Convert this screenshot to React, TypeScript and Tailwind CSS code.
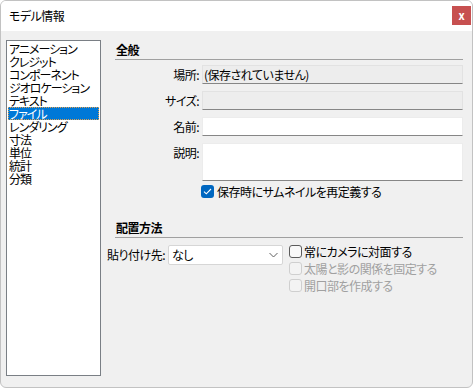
import React from "react";

const font = { fontFamily: '"Noto Sans CJK JP", "Noto Sans", sans-serif' };

const items = [
  "アニメーション",
  "クレジット",
  "コンポーネント",
  "ジオロケーション",
  "テキスト",
  "ファイル",
  "レンダリング",
  "寸法",
  "単位",
  "統計",
  "分類",
];

function Check({ checked, disabled }: { checked?: boolean; disabled?: boolean }) {
  if (checked) {
    return (
      <div className="w-[13px] h-[13px] rounded-[3px] bg-[#0067c0] flex items-center justify-center shrink-0">
        <svg width="9" height="7" viewBox="0 0 9 7">
          <path d="M1 3.6 L3.3 5.8 L8 1" fill="none" stroke="white" strokeWidth="1.1" />
        </svg>
      </div>
    );
  }
  return (
    <div
      className={
        disabled
          ? "w-[13px] h-[13px] rounded-[3px] border border-[#cfcfcf] bg-[#f3f3f3] shrink-0"
          : "w-[13px] h-[13px] rounded-[3px] border border-[#5c5c5c] bg-[#f9f9f9] shrink-0"
      }
    />
  );
}

export default function App() {
  return (
    <div
      className="w-[473px] h-[388px] border border-[#c2c2c2] rounded-[6px] overflow-hidden bg-[#f0f0f0] flex flex-col text-[12px] tracking-[-0.5px] text-black [font-feature-settings:'palt']"
      style={font}
    >
      <div className="h-[30px] bg-white flex items-center justify-between pl-[8px] pr-[1px] shrink-0">
        <span className="leading-[14px]">モデル情報</span>
        <div className="w-[19px] h-[19px] bg-[#c75050] flex items-center justify-center text-white text-[11px] font-bold leading-none mt-[-2px] tracking-normal">
          x
        </div>
      </div>
      <div className="flex pt-[9px] pl-[5px]">
        <div className="w-[95px] h-[336px] border border-[#7a7f85] bg-white pt-[1px] px-[1px] shrink-0 tracking-[-1px]">
          {items.map((it) =>
            it === "ファイル" ? (
              <div
                key={it}
                className="h-[13px] leading-[13px] bg-[#0078d7] text-white pl-[1px] outline outline-1 outline-dotted outline-[#e0a050] -outline-offset-1 whitespace-nowrap"
              >
                {it}
              </div>
            ) : (
              <div key={it} className="h-[13px] leading-[13px] pl-[1px] whitespace-nowrap">
                {it}
              </div>
            )
          )}
        </div>
        <div className="ml-[14px] w-[348px] flex flex-col">
          <div className="h-[19px] flex items-center font-bold pl-[1px] leading-[14px]">全般</div>
          <div className="h-[1px] bg-[#a0a0a0]" />
          <div className="flex items-center mt-[5px] h-[19px]">
            <div className="w-[84px] text-right leading-[14px]">場所:</div>
            <div className="ml-[3px] flex-1 h-[19px] bg-[#ededed] border border-[#e2e2e2] border-b-[#868686] flex items-center pl-[1px] leading-[14px]">
              (保存されていません)
            </div>
          </div>
          <div className="flex items-center mt-[7px] h-[19px]">
            <div className="w-[84px] text-right leading-[14px]">サイズ:</div>
            <div className="ml-[3px] flex-1 h-[19px] bg-[#ededed] border border-[#e2e2e2] border-b-[#868686]" />
          </div>
          <div className="flex items-center mt-[7px] h-[19px]">
            <div className="w-[84px] text-right leading-[14px]">名前:</div>
            <div className="ml-[3px] flex-1 h-[19px] bg-white border border-[#ececec] border-b-[#868686]" />
          </div>
          <div className="flex items-start mt-[7px]">
            <div className="w-[84px] text-right leading-[14px] mt-[3px]">説明:</div>
            <div className="ml-[3px] flex-1 h-[38px] bg-white border border-[#ececec] border-b-[#868686]" />
          </div>
          <div className="flex items-center mt-[4px] pl-[86px] gap-[3px] h-[13px]">
            <Check checked />
            <span className="leading-[14px]">保存時にサムネイルを再定義する</span>
          </div>
          <div className="h-[19px] flex items-center font-bold pl-[1px] leading-[14px] mt-[20px]">配置方法</div>
          <div className="h-[1px] bg-[#a0a0a0]" />
          <div className="flex items-start mt-[7px] ml-[-8px]">
            <div className="w-[59px] h-[20px] flex items-center leading-[14px] whitespace-nowrap">貼り付け先:</div>
            <div className="ml-[2px] w-[115px] h-[20px] bg-white border border-[#d6d6d6] rounded-[2px] flex items-center justify-between pl-[3px] pr-[4px]">
              <span className="leading-[14px]">なし</span>
              <svg width="9" height="6" viewBox="0 0 9 6">
                <path d="M0.5 1 L4.5 5 L8.5 1" fill="none" stroke="#606060" strokeWidth="1" />
              </svg>
            </div>
            <div className="ml-[6px] flex flex-col">
              <div className="flex items-center gap-[2px] h-[13px]">
                <Check />
                <span className="leading-[14px]">常にカメラに対面する</span>
              </div>
              <div className="flex items-center gap-[2px] h-[13px] mt-[4px] text-[#a0a0a0]">
                <Check disabled />
                <span className="leading-[14px]">太陽と影の関係を固定する</span>
              </div>
              <div className="flex items-center gap-[2px] h-[13px] mt-[4px] text-[#a0a0a0]">
                <Check disabled />
                <span className="leading-[14px]">開口部を作成する</span>
              </div>
            </div>
          </div>
        </div>
      </div>
    </div>
  );
}
